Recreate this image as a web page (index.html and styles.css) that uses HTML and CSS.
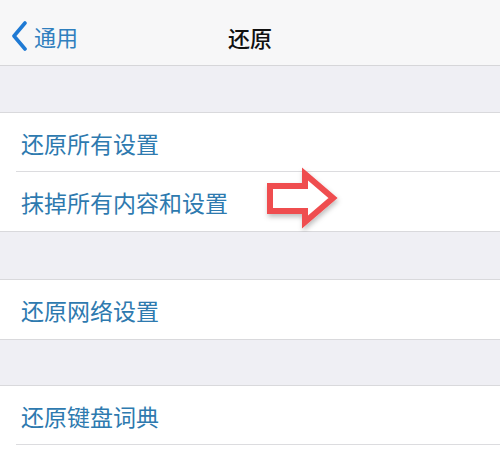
FILE: index.html
```html
<!DOCTYPE html>
<html lang="zh-CN">

<head>
    <meta charset="UTF-8">
    <meta name="viewport" content="width=device-width, initial-scale=1.0">
    <title>还原</title>
    <link rel="stylesheet" href="styles.css">
</head>

<body>

    <nav class="navbar">
        <a class="back" href="#">
            <svg class="back-icon" width="15" height="30" viewBox="0 0 15 30">
                <polyline points="13,2 2,15 13,28" fill="none" stroke="#1f7ad4" stroke-width="3.6"
                    stroke-linecap="round" stroke-linejoin="round" />
            </svg>
            <span>通用</span>
        </a>
        <h1 class="title">还原</h1>
    </nav>

    <main class="page">
        <div class="gap"></div>
        <ul class="group">
            <li class="row">还原所有设置</li>
            <li class="row">抹掉所有内容和设置</li>
        </ul>

        <div class="gap gap-mid"></div>
        <ul class="group">
            <li class="row">还原网络设置</li>
        </ul>

        <div class="gap gap-last"></div>
        <ul class="group open-end">
            <li class="row">还原键盘词典</li>
        </ul>

        <!-- red pointer drawn over the list -->
        <svg class="pointer" width="85" height="70" viewBox="262 162 85 70">
            <defs>
                <filter id="shade" x="-30%" y="-30%" width="160%" height="160%">
                    <feDropShadow dx="1" dy="3" stdDeviation="2.5" flood-color="#000" flood-opacity="0.25" />
                </filter>
            </defs>
            <polygon points="270,186 305,186 305,174 333,198 305,222 305,211 270,211" fill="#fff"
                stroke="#ef4d4f" stroke-width="6" stroke-linejoin="miter" filter="url(#shade)" />
        </svg>
    </main>

</body>

</html>
```

FILE: styles.css
```css
body {
    margin: 0;
    width: 500px;
    height: 457px;
    overflow: hidden;
    background-color: #efeff4;
    font-family: "Noto Sans CJK SC", "Noto Sans", sans-serif;
}

.navbar {
    position: relative;
    height: 65px;
    display: flex;
    align-items: center;
    justify-content: center;
    background-color: #f7f7f8;
    border-bottom: 1px solid #d6d6d9;
}

.back {
    position: absolute;
    left: 12px;
    top: 21px;
    display: flex;
    align-items: center;
    gap: 7px;
    color: #2f7fbe;
    text-decoration: none;
    font-size: 22px;
    line-height: 30px;
}

.back-icon {
    display: block;
}

.title {
    margin: 0;
    padding-top: 8px;
    font-size: 22px;
    font-weight: 500;
    color: #111;
}

.page {
    position: relative;
}

.gap {
    height: 46px;
}

.gap-mid {
    height: 47px;
}

.gap-last {
    height: 45px;
}

.group {
    list-style: none;
    margin: 0;
    padding: 0 0 0 16px;
    background-color: #fff;
    border-top: 1px solid #d9d9dc;
    border-bottom: 1px solid #d9d9dc;
}

.group.open-end {
    border-bottom: none;
    height: 80px;
}

.row {
    height: 59px;
    display: flex;
    align-items: center;
    padding: 1px 0 0 5px;
    box-sizing: border-box;
    font-size: 23px;
    color: #2e7aaf;
    border-bottom: 1px solid #dcdcdf;
}

.row:last-child {
    border-bottom: none;
}

.open-end .row:last-child {
    border-bottom: 1px solid #dcdcdf;
}

.pointer {
    position: absolute;
    left: 262px;
    top: 96px;
}
```
